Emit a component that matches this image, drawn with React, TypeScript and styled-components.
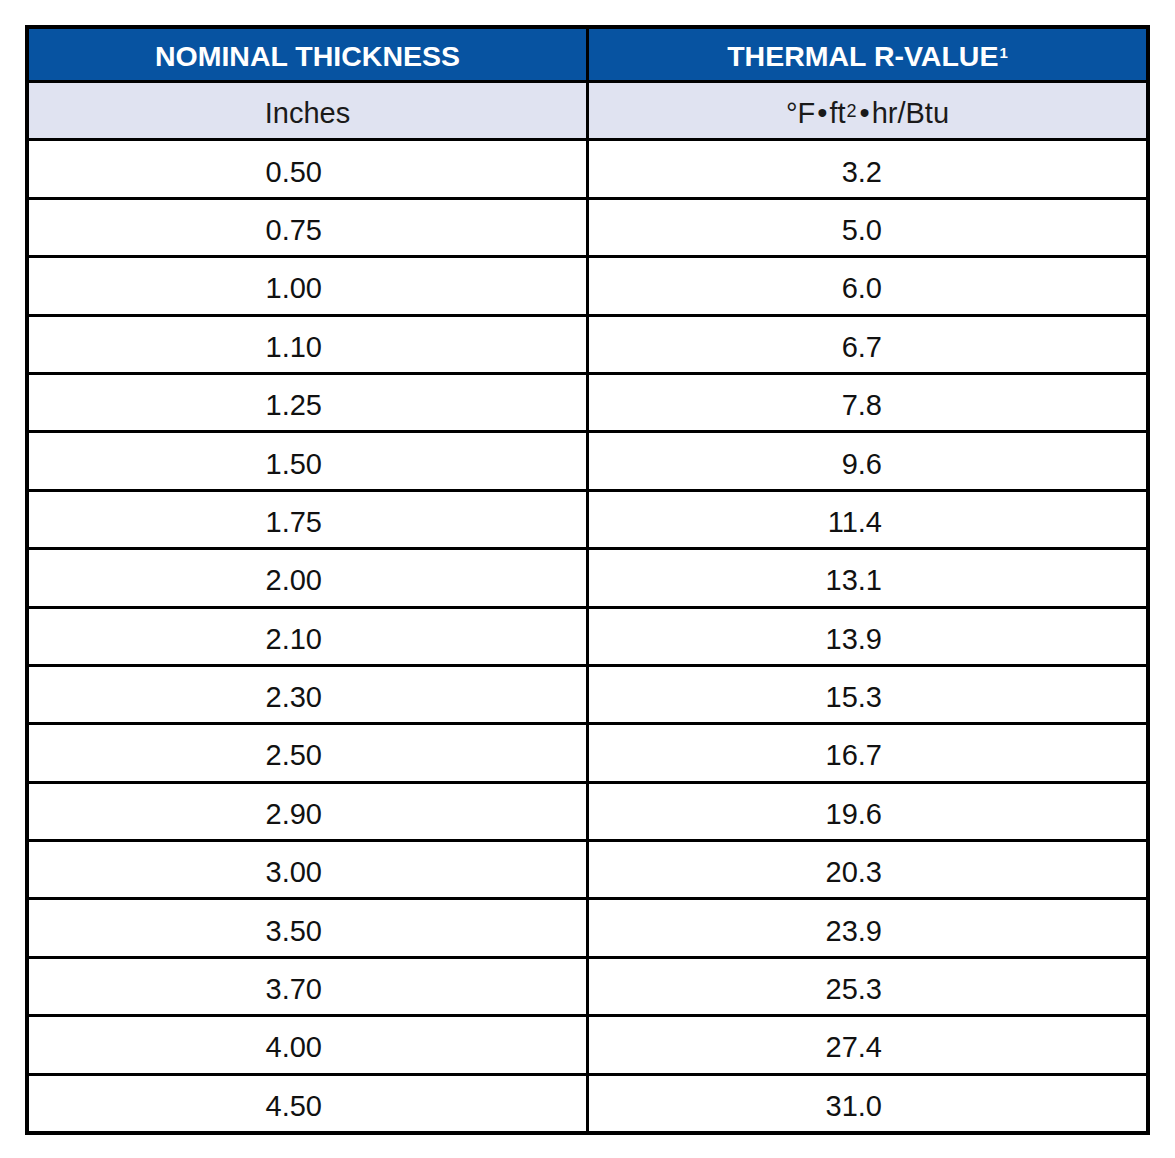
import styled, { createGlobalStyle } from "styled-components";

const rows: [string, string][] = [
  ["0.50", "3.2"],
  ["0.75", "5.0"],
  ["1.00", "6.0"],
  ["1.10", "6.7"],
  ["1.25", "7.8"],
  ["1.50", "9.6"],
  ["1.75", "11.4"],
  ["2.00", "13.1"],
  ["2.10", "13.9"],
  ["2.30", "15.3"],
  ["2.50", "16.7"],
  ["2.90", "19.6"],
  ["3.00", "20.3"],
  ["3.50", "23.9"],
  ["3.70", "25.3"],
  ["4.00", "27.4"],
  ["4.50", "31.0"],
];

const App = () => {
  return (
    <>
      <GlobalStyle />
      <Table>
        <HeadCell>NOMINAL THICKNESS</HeadCell>
        <HeadCell>
          THERMAL R-VALUE<HeadSup>1</HeadSup>
        </HeadCell>
        <UnitCell>Inches</UnitCell>
        <UnitCell>
          °F<Dot>•</Dot>ft<UnitSup>2</UnitSup>
          <Dot>•</Dot>hr/Btu
        </UnitCell>
        {rows.map(([thickness, rValue]) => (
          <Row key={thickness}>
            <DataCell>{thickness}</DataCell>
            <DataCell>{rValue}</DataCell>
          </Row>
        ))}
      </Table>
    </>
  );
};

export default App;

const GlobalStyle = createGlobalStyle`
  body {
    margin: 0;
    background: #ffffff;
    font-family: "Liberation Sans", Arial, sans-serif;
  }
`;

const Table = styled.div`
  box-sizing: border-box;
  margin: 25px 0 0 25px;
  width: 1125px;
  height: 1110px;
  display: grid;
  grid-template-columns: 1fr 1fr;
  grid-template-rows: 51px repeat(18, 1fr);
  gap: 3px;
  border: 4px solid #000;
  background: #000;
`;

const Cell = styled.div`
  display: flex;
  align-items: center;
  justify-content: center;
  padding-top: 6px;
  box-sizing: border-box;
  font-size: 29px;
  color: #111;
`;

const HeadCell = styled(Cell)`
  background: #0753a1;
  color: #ffffff;
  font-weight: 700;
  font-size: 28.5px;
  padding-top: 3px;
`;

const HeadSup = styled.sup`
  font-size: 15px;
  align-self: flex-start;
  margin-top: 12px;
  margin-left: 1px;
`;

const UnitCell = styled(Cell)`
  background: #e0e3f1;
  color: #1a1a1a;
`;

const UnitSup = styled.sup`
  font-size: 18px;
  position: relative;
  top: -2px;
  margin: 0 1px;
`;

const Dot = styled.span`
  margin: 0 2px;
`;

const Row = styled.div`
  display: contents;
`;

const DataCell = styled(Cell)`
  background: #ffffff;
  justify-content: flex-end;
  padding-right: 264px;
`;
